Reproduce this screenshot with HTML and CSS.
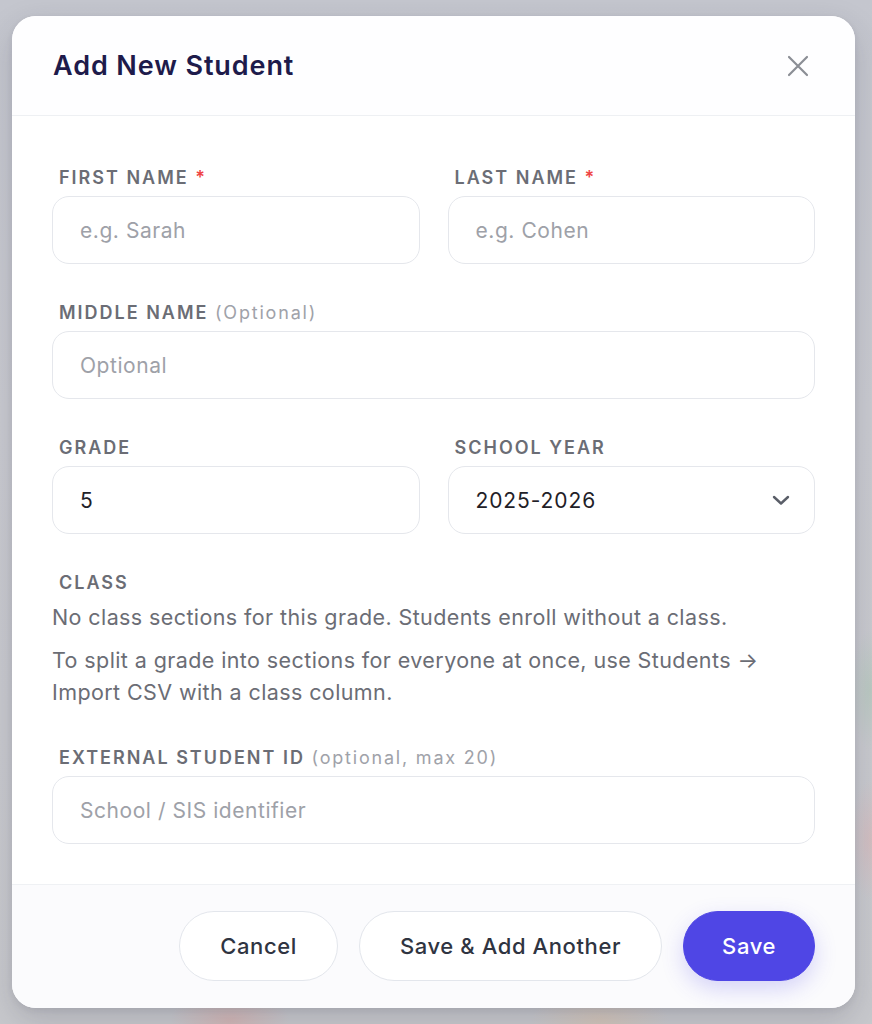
FILE: index.html
```html
<!DOCTYPE html>
<html lang="en">
<head>
<meta charset="utf-8">
<title>Add New Student</title>
<link rel="stylesheet" href="styles.css">
</head>
<body>
<div class="backdrop">
  <div class="modal">
    <header class="modal-header">
      <h1 class="title">Add New Student</h1>
      <button class="close" aria-label="Close">
        <svg width="22" height="22" viewBox="0 0 22 22" fill="none" stroke="currentColor" stroke-width="2.2" stroke-linecap="round"><path d="M2 2L20 20M20 2L2 20"/></svg>
      </button>
    </header>
    <div class="modal-body">
      <div class="row two">
        <div class="field">
          <label class="label">FIRST NAME <span class="req">*</span></label>
          <div class="input placeholder">e.g. Sarah</div>
        </div>
        <div class="field">
          <label class="label">LAST NAME <span class="req">*</span></label>
          <div class="input placeholder">e.g. Cohen</div>
        </div>
      </div>
      <div class="field">
        <label class="label">MIDDLE NAME <span class="opt">(Optional)</span></label>
        <div class="input placeholder">Optional</div>
      </div>
      <div class="row two">
        <div class="field">
          <label class="label">GRADE</label>
          <div class="input value">5</div>
        </div>
        <div class="field">
          <label class="label">SCHOOL YEAR</label>
          <div class="input value select">
            <span>2025-2026</span>
            <svg class="chev" width="18" height="12" viewBox="0 0 18 12" fill="none" stroke="currentColor" stroke-width="2.4" stroke-linecap="round" stroke-linejoin="round"><path d="M2 3L9 9.5L16 3"/></svg>
          </div>
        </div>
      </div>
      <div class="field class-field">
        <label class="label">CLASS</label>
        <p class="note">No class sections for this grade. Students enroll without a class.</p>
        <p class="note second">To split a grade into sections for everyone at once, use Students → Import CSV with a class column.</p>
      </div>
      <div class="field">
        <label class="label">EXTERNAL STUDENT ID <span class="opt">(optional, max 20)</span></label>
        <div class="input placeholder">School / SIS identifier</div>
      </div>
    </div>
    <footer class="modal-footer">
      <button class="btn">Cancel</button>
      <button class="btn">Save &amp; Add Another</button>
      <button class="btn primary">Save</button>
    </footer>
  </div>
</div>
</body>
</html>
```

FILE: styles.css
```css
* { box-sizing: border-box; }
html, body { margin: 0; padding: 0; }
body {
  font-family: Inter, "Noto Sans", "Liberation Sans", sans-serif;
  width: 872px;
  height: 1024px;
  overflow: hidden;
}
.backdrop {
  width: 872px;
  height: 1024px;
  padding: 16px 17px 16px 12px;
  background:
    radial-gradient(ellipse 60px 30px at 230px 1020px, rgba(230,150,140,0.35), transparent),
    radial-gradient(ellipse 70px 30px at 600px 1020px, rgba(230,190,150,0.35), transparent),
    radial-gradient(ellipse 20px 60px at 870px 690px, rgba(160,200,170,0.35), transparent),
    radial-gradient(ellipse 20px 60px at 870px 840px, rgba(230,170,170,0.35), transparent),
    linear-gradient(180deg, #c4c6ce 0%, #cacbd1 40%, #c8c9cd 100%);
}
.modal {
  width: 843px;
  height: 992px;
  background: #ffffff;
  border-radius: 24px;
  box-shadow: 0 12px 32px rgba(40, 40, 60, 0.18), 0 2px 6px rgba(40,40,60,0.08);
  display: flex;
  flex-direction: column;
  overflow: hidden;
}
.modal-header {
  height: 100px;
  flex: none;
  display: flex;
  align-items: center;
  justify-content: space-between;
  padding: 0 46px 0 41px;
  border-bottom: 1px solid #eef0f3;
  background: #fefeff;
}
.title {
  margin: 0;
  font-size: 27px;
  font-weight: 600;
  color: #1e1b4b;
  letter-spacing: 0.9px;
}
.close {
  border: 0;
  background: none;
  padding: 0;
  color: #8b8e95;
  display: flex;
  width: 22px;
  height: 22px;
}
.modal-body {
  flex: 1;
  padding: 51px 40px 0 40px;
  display: flex;
  flex-direction: column;
  gap: 38px;
}
.row.two {
  display: grid;
  grid-template-columns: 1fr 1fr;
  gap: 28px;
}
.field {
  display: flex;
  flex-direction: column;
}
.label {
  display: block;
  font-size: 18px;
  line-height: 22px;
  font-weight: 600;
  letter-spacing: 2px;
  color: #6b6d75;
  padding-left: 7px;
  margin-bottom: 7px;
}
.req { color: #ef4444; font-weight: 600; }
.opt {
  color: #a0a2a9;
  font-weight: 400;
  letter-spacing: 1.8px;
}
.input {
  height: 68px;
  border: 1.5px solid #e5e7ec;
  border-radius: 17px;
  background: #fff;
  padding: 0 26px 0 27px;
  display: flex;
  align-items: center;
  font-size: 21px;
  letter-spacing: 0.55px;
}
.placeholder { color: #9ea1a8; }
.value { color: #1f2128; letter-spacing: 0.9px; }
.select { justify-content: space-between; }
.chev { color: #5a5e68; margin-right: -2px; }
.class-field .label { margin-bottom: 7px; }
.note {
  margin: 0;
  font-size: 21.5px;
  line-height: 32px;
  letter-spacing: 0.4px;
  color: #6b6d75;
}
.note.second { margin-top: 11px; }
.class-field + .field { margin-top: 1px; }
.modal-footer {
  flex: none;
  height: 124px;
  border-top: 1px solid #eff1f4;
  background: #fbfbfd;
  display: flex;
  justify-content: flex-end;
  align-items: center;
  gap: 21px;
  padding: 0 40px 2px 40px;
}
.btn {
  height: 70px;
  border-radius: 35px;
  border: 1.5px solid #e3e6ec;
  background: #fff;
  font-family: inherit;
  font-size: 22px;
  font-weight: 500;
  letter-spacing: 0.6px;
  color: #2f3441;
  padding: 0 40px;
}
.btn.primary {
  background: #4f46e5;
  border-color: #4f46e5;
  color: #fff;
  padding: 0 38px;
  box-shadow: 0 8px 22px rgba(79, 70, 229, 0.22);
}
```
